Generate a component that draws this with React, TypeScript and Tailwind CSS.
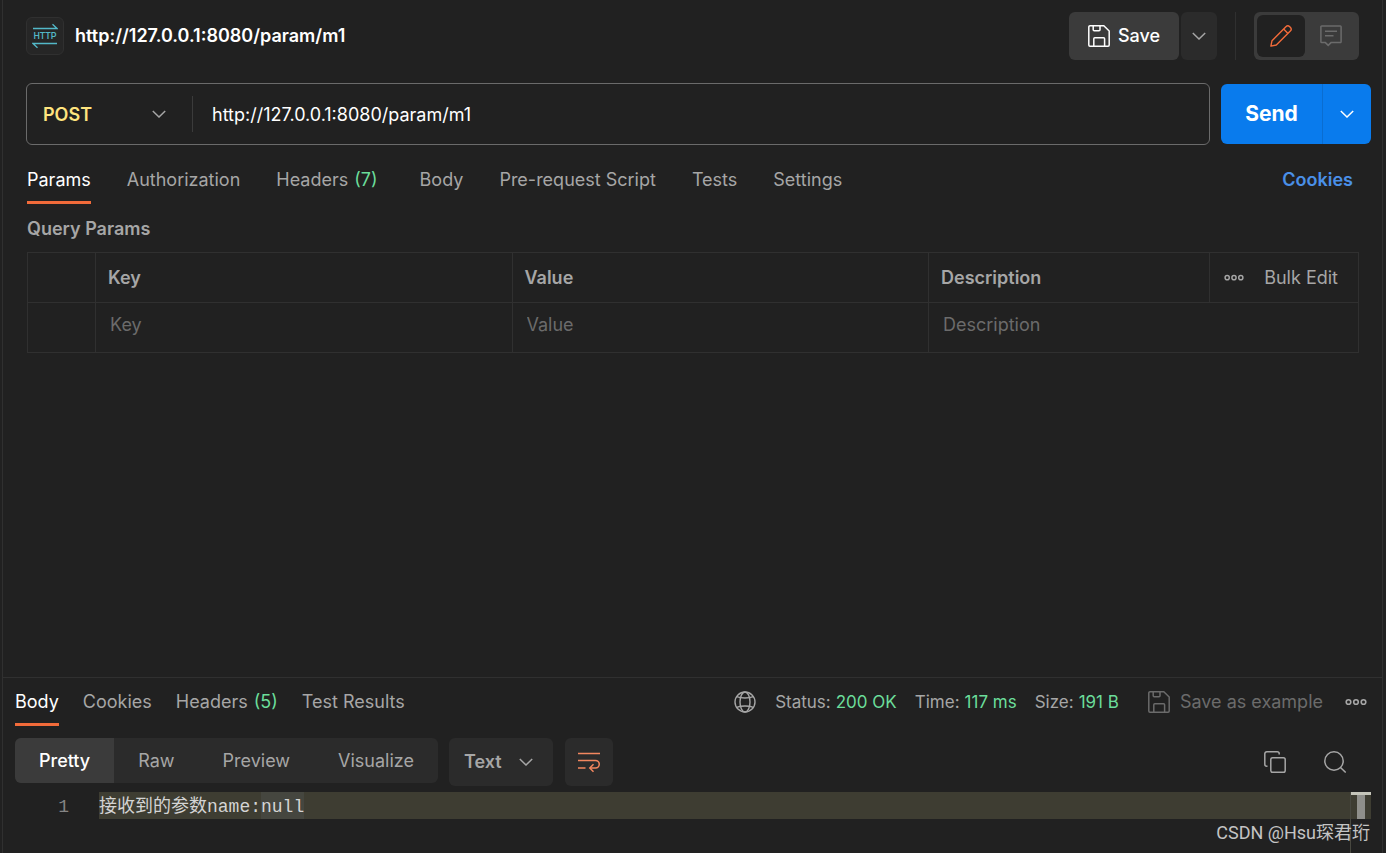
import React, { useState } from 'react';

interface IconProps {
  className?: string;
}

const ChevronIcon: React.FC<IconProps> = ({ className }) => (
  <svg className={className} width="14" height="8" viewBox="0 0 14 8" fill="none" stroke="currentColor" strokeWidth="1.5">
    <path d="M.8 1 7 7l6.2-6" />
  </svg>
);

const SaveIcon: React.FC<IconProps> = ({ className }) => (
  <svg className={className} width="22" height="22" viewBox="0 0 22 22" fill="none" stroke="currentColor" strokeWidth="1.5">
    <path d="M2 .8h13.8L21.2 6v14a1.2 1.2 0 0 1-1.2 1.2H2A1.2 1.2 0 0 1 .8 20V2A1.2 1.2 0 0 1 2 .8Z" />
    <path d="M5.2.8v4a1 1 0 0 0 1 1H11a1 1 0 0 0 1-1v-4" />
    <path d="M5.8 21.2v-7.400a1 1 0 0 1 1-1h8.800a1 1 0 0 1 1 1v7.400" />
  </svg>
);

const PencilIcon: React.FC<IconProps> = ({ className }) => (
  <svg className={className} width="22" height="22" viewBox="0 0 22 22" fill="none" stroke="currentColor" strokeWidth="1.4" strokeLinejoin="round">
    <path d="M.9 21.1 2 15.7 15.9 1.7a2.7 2.7 0 0 1 3.8 0l.6.6a2.7 2.7 0 0 1 0 3.8L6.3 20 .9 21.1Z" />
    <path d="m13.6 4 4.4 4.4" />
  </svg>
);

const CommentIcon: React.FC<IconProps> = ({ className }) => (
  <svg className={className} width="22" height="22" viewBox="0 0 22 22" fill="none" stroke="currentColor" strokeWidth="1.5">
    <path d="M1.700 1h18.600a.8.8 0 0 1 .8.8v15a.8.8 0 0 1-.8.8H11L8.2 20.4 5.4 17.6H1.700a.8.8 0 0 1-.8-.8v-15a.8.8 0 0 1 .8-.8Z" />
    <path d="M5 6.2h12M5 10.7h8.5" />
  </svg>
);

const GlobeIcon: React.FC<IconProps> = ({ className }) => (
  <svg className={className} width="22" height="22" viewBox="0 0 22 22" fill="none" stroke="currentColor" strokeWidth="1.4">
    <circle cx="11" cy="11" r="10" />
    <ellipse cx="11" cy="11" rx="5" ry="10" />
    <path d="M2.7 5.6c4.5 1.9 12.1 1.9 16.6 0M2.7 16.4c4.5-1.9 12.1-1.9 16.6 0" />
  </svg>
);

const DotsIcon: React.FC<IconProps> = ({ className }) => (
  <svg className={className} viewBox="0 0 22 8" fill="none" stroke="currentColor" strokeWidth="1.6">
    <circle cx="3.5" cy="4" r="2.3" />
    <circle cx="11" cy="4" r="2.3" />
    <circle cx="18.5" cy="4" r="2.3" />
  </svg>
);

const WrapIcon: React.FC<IconProps> = ({ className }) => (
  <svg className={className} width="22" height="22" viewBox="0 0 22 22" fill="none" stroke="currentColor" strokeWidth="1.5">
    <path d="M0 2.500h22M0 9.500h17.500a3.700 3.700 0 0 1 0 7.500H12M0 17h7.500" />
    <path d="m15.500 13.300-3.700 3.700 3.700 3.700" />
  </svg>
);

const CopyIcon: React.FC<IconProps> = ({ className }) => (
  <svg className={className} width="22" height="22" viewBox="0 0 22 22" fill="none" stroke="currentColor" strokeWidth="1.5">
    <rect x="6.8" y="6.8" width="14.4" height="14.4" rx="1.8" />
    <path d="M3.5 15.200h-.7a2 2 0 0 1-2-2V2.800a2 2 0 0 1 2-2h10.400a2 2 0 0 1 2 2v.7" />
  </svg>
);

const SearchIcon: React.FC<IconProps> = ({ className }) => (
  <svg className={className} width="22" height="22" viewBox="0 0 22 22" fill="none" stroke="currentColor" strokeWidth="1.5">
    <circle cx="10" cy="10" r="9.2" />
    <path d="m16.5 16.5 5.200 5" />
  </svg>
);

const HttpIcon: React.FC<IconProps> = ({ className }) => (
  <svg className={className} width="26" height="26" viewBox="0 0 26 26" fill="none" stroke="currentColor" strokeWidth="1.3">
    <path d="M1 5.500h24L20.500 1.300M25 20.500H1l4.500 4.200" />
    <text
      x="13"
      y="16"
      textAnchor="middle"
      fill="currentColor"
      stroke="none"
      className="font-['Roboto',sans-serif] text-[9px] font-medium"
    >
      HTTP
    </text>
  </svg>
);

interface Tab {
  label: string;
  count?: number;
}

const requestTabs: Tab[] = [
  { label: 'Params' },
  { label: 'Authorization' },
  { label: 'Headers', count: 7 },
  { label: 'Body' },
  { label: 'Pre-request Script' },
  { label: 'Tests' },
  { label: 'Settings' },
];

const responseTabs: Tab[] = [
  { label: 'Body' },
  { label: 'Cookies' },
  { label: 'Headers', count: 5 },
  { label: 'Test Results' },
];

const views = ['Pretty', 'Raw', 'Preview', 'Visualize'];

interface TabButtonProps {
  tab: Tab;
  active: boolean;
  onClick: () => void;
  countClassName?: string;
}

const TabButton: React.FC<TabButtonProps> = ({ tab, active, onClick, countClassName = 'ml-[6px]' }) => (
  <button
    type="button"
    onClick={onClick}
    className={`h-12 whitespace-nowrap border-b-3 pt-0.5 ${active ? 'border-[#f26b3a] text-white' : 'border-transparent'}`}
  >
    {tab.label}
    {tab.count !== undefined && <span className={`text-[#6bdd9a] ${countClassName}`}>({tab.count})</span>}
  </button>
);

const RequestHeader: React.FC = () => (
  <header className="flex items-center justify-between px-[23px] pt-3">
    <div className="flex items-center gap-[11px]">
      <div className="flex size-[38px] items-center justify-center rounded-md border border-[#303030] bg-[#262626] text-[#53b8c8]">
        <HttpIcon />
      </div>
      <h1 className="font-semibold text-white">http://127.0.0.1:8080/param/m1</h1>
    </div>
    <div className="flex h-12 items-stretch">
      <button type="button" className="flex w-[110px] items-center justify-center gap-2 rounded-md bg-[#3b3b3b] font-medium text-white">
        <SaveIcon />
        Save
      </button>
      <button type="button" aria-label="Save options" className="ml-0.5 flex w-9 items-center justify-center rounded-md bg-[#2b2b2b]">
        <ChevronIcon />
      </button>
      <div className="mx-[18px] w-px bg-[#303030]" />
      <div className="flex w-[105px] rounded-md bg-[#3b3b3b] p-[3px]">
        <button type="button" aria-label="Edit" className="flex w-12 items-center justify-center rounded-md bg-[#212121] text-[#f26b3a]">
          <PencilIcon />
        </button>
        <button type="button" aria-label="Comments" className="flex flex-1 items-center justify-center text-[#6b6b6b]">
          <CommentIcon />
        </button>
      </div>
    </div>
  </header>
);

const UrlBar: React.FC = () => {
  const [method, setMethod] = useState('POST');
  const [url, setUrl] = useState('http://127.0.0.1:8080/param/m1');

  return (
    <div className="mt-[23px] flex items-center gap-[11px] pl-[23px] pr-[11px]">
      <div className="flex h-[62px] flex-1 items-center rounded-md border border-[#6b6b6b]">
        <div className="relative flex h-9 w-[166px] items-center border-r border-[#3b3b3b]">
          <select
            aria-label="Method"
            value={method}
            onChange={(e) => setMethod(e.target.value)}
            className="w-full appearance-none bg-transparent pl-4 pt-0.5 font-semibold text-[#ffe47e] outline-none"
          >
            <option>POST</option>
            <option>GET</option>
            <option>PUT</option>
            <option>DELETE</option>
          </select>
          <ChevronIcon className="pointer-events-none absolute right-[26px]" />
        </div>
        <input
          type="text"
          aria-label="Request URL"
          value={url}
          onChange={(e) => setUrl(e.target.value)}
          className="min-w-0 flex-1 bg-transparent px-[19px] pt-0.5 text-white outline-none"
        />
      </div>
      <div className="flex h-[60px] w-[150px] overflow-hidden rounded-md bg-[#097bed] text-white">
        <button type="button" className="w-[101px] text-[21px] font-bold">
          Send
        </button>
        <button type="button" aria-label="Send options" className="flex flex-1 items-center justify-center border-l border-[#0a6dd0]">
          <ChevronIcon />
        </button>
      </div>
    </div>
  );
};

const QueryParams: React.FC = () => {
  const fieldClass = 'w-full bg-transparent px-[14px] pb-[5px] outline-none placeholder:text-[#6b6b6b]';

  return (
    <section className="pl-6 pr-[23px] pt-[13px]">
      <h2 className="font-semibold">Query Params</h2>
      <table className="mt-[11px] w-full table-fixed border-collapse text-left">
        <colgroup>
          <col className="w-[68px]" />
          <col />
          <col />
          <col className="w-[281px]" />
          <col className="w-[149px]" />
        </colgroup>
        <thead>
          <tr className="h-[50px]">
            <th className="border border-[#303030]" />
            <th className="border border-[#303030] px-3 font-semibold">Key</th>
            <th className="border border-[#303030] px-3 font-semibold">Value</th>
            <th className="border border-[#303030] px-3 font-semibold">Description</th>
            <th className="border border-[#303030] font-normal">
              <div className="flex items-center justify-between pl-[14px] pr-5">
                <button type="button" aria-label="Column options">
                  <DotsIcon className="w-5" />
                </button>
                <button type="button">Bulk Edit</button>
              </div>
            </th>
          </tr>
        </thead>
        <tbody>
          <tr className="h-[50px]">
            <td className="border border-[#303030]" />
            <td className="border border-[#303030]">
              <input type="text" aria-label="Key" placeholder="Key" className={fieldClass} />
            </td>
            <td className="border border-[#303030]">
              <input type="text" aria-label="Value" placeholder="Value" className={fieldClass} />
            </td>
            <td className="border border-[#303030]" colSpan={2}>
              <input type="text" aria-label="Description" placeholder="Description" className={fieldClass} />
            </td>
          </tr>
        </tbody>
      </table>
    </section>
  );
};

const ResponsePane: React.FC = () => {
  const [tab, setTab] = useState('Body');
  const [view, setView] = useState('Pretty');

  return (
    <section className="flex h-44 flex-col border-t border-[#303030]">
      <div className="flex items-center justify-between pl-3 pr-[15px]">
        <nav className="flex gap-6">
          {responseTabs.map((t) => (
            <TabButton key={t.label} tab={t} active={t.label === tab} onClick={() => setTab(t.label)} />
          ))}
        </nav>
        <div className="flex items-center">
          <GlobeIcon />
          <dl className="ml-[19px] flex gap-[18px] text-[17px]">
            <div className="flex gap-[5px]">
              <dt>Status:</dt>
              <dd className="text-[#6bdd9a]">200 OK</dd>
            </div>
            <div className="flex gap-[5px]">
              <dt>Time:</dt>
              <dd className="text-[#6bdd9a]">117 ms</dd>
            </div>
            <div className="flex gap-[5px]">
              <dt>Size:</dt>
              <dd className="text-[#6bdd9a]">191 B</dd>
            </div>
          </dl>
          <button type="button" className="ml-[29px] flex items-center gap-[10px] text-[#6b6b6b]">
            <SaveIcon />
            Save as example
          </button>
          <button type="button" aria-label="More actions" className="ml-[22px]">
            <DotsIcon className="w-[22px]" />
          </button>
        </div>
      </div>

      <div className="mt-3 flex items-start pl-3 pr-9">
        <div className="flex h-[45px] overflow-hidden rounded-md bg-[#2b2b2b]">
          {views.map((v) => (
            <button
              key={v}
              type="button"
              onClick={() => setView(v)}
              className={`px-6 ${v === view ? 'bg-[#3b3b3b] font-medium text-white' : ''}`}
            >
              {v}
            </button>
          ))}
        </div>
        <div className="relative ml-[11px] flex h-12 w-[104px] items-center rounded-md bg-[#2b2b2b]">
          <select aria-label="Response format" className="w-full appearance-none bg-transparent pl-[15px] font-semibold outline-none">
            <option>Text</option>
            <option>JSON</option>
            <option>HTML</option>
          </select>
          <ChevronIcon className="pointer-events-none absolute right-5" />
        </div>
        <button type="button" aria-label="Wrap lines" className="ml-3 flex size-12 items-center justify-center rounded-md bg-[#2b2b2b] text-[#f3875f]">
          <WrapIcon />
        </button>
        <div className="ml-auto flex h-12 items-center gap-[38px]">
          <button type="button" aria-label="Copy">
            <CopyIcon />
          </button>
          <button type="button" aria-label="Search">
            <SearchIcon />
          </button>
        </div>
      </div>

      <div className="mt-[6px] flex flex-1 pr-[11px] font-['Liberation_Mono','Noto_Sans_CJK_SC',monospace] leading-[30px]">
        <span className="w-24 pr-[30px] text-right text-[#858585]">1</span>
        <code className="h-[27px] flex-1 bg-[#3e3d32] font-['Liberation_Mono','Noto_Sans_CJK_SC',monospace] text-[#d4d4d4]">
          接收到的参数name:<span className="inline-block h-[27px] bg-[#45463f] align-top">null</span>
        </code>
        <div className="w-[21px] border-l border-[#484840]">
          <div className="flex h-[27px] justify-center border-t-3 border-[#c5c5ba] bg-[#3e3d32]">
            <div className="w-2 bg-[#8f8f8b]" />
          </div>
        </div>
      </div>
    </section>
  );
};

const App: React.FC = () => {
  const [tab, setTab] = useState('Params');

  return (
    <div className="relative min-h-screen bg-[#212121] pl-0.5 pr-[3px] font-['Inter',sans-serif] text-[18px] leading-6 text-[#a6a6a6]">
      <main className="flex min-h-screen flex-col border-x border-[#303030]">
        <RequestHeader />
        <UrlBar />
        <div className="mt-[11px] flex items-center justify-between pl-6 pr-[29px]">
          <nav className="flex gap-9">
            {requestTabs.map((t) => (
              <TabButton
                key={t.label}
                tab={t}
                active={t.label === tab}
                onClick={() => setTab(t.label)}
                countClassName="mx-[6px]"
              />
            ))}
          </nav>
          <a href="#cookies" className="font-semibold text-[#4a90e8]">
            Cookies
          </a>
        </div>
        <QueryParams />
        <div className="flex-1" />
        <ResponsePane />
      </main>
      <p className="pointer-events-none absolute bottom-2 right-4 font-['Roboto','Noto_Sans_CJK_SC',sans-serif] text-[#c4c4c4]">
        CSDN @Hsu琛君珩
      </p>
    </div>
  );
};

export default App;
